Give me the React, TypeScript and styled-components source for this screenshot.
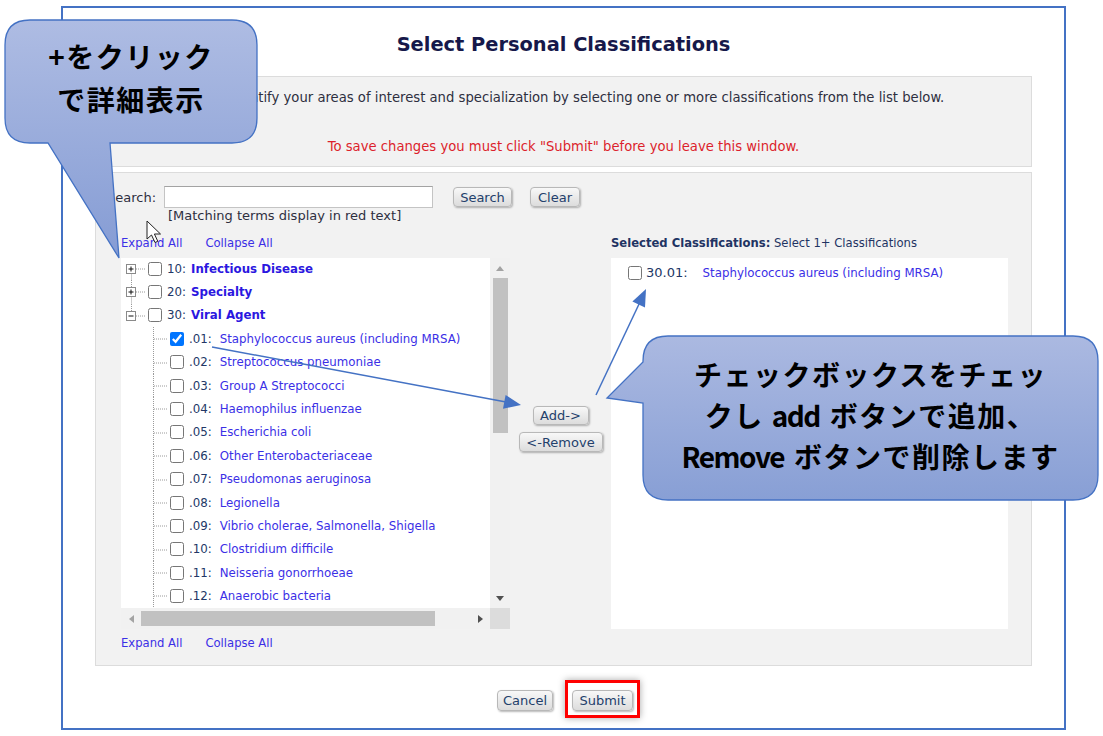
import React from "react";
import styled, { createGlobalStyle } from "styled-components";

const GlobalStyle = createGlobalStyle`
  html, body {
    margin: 0;
    padding: 0;
    background: #ffffff;
  }
  body {
    font-family: "DejaVu Sans", Verdana, sans-serif;
  }
`;

const Page = styled.div`
  position: relative;
  width: 1103px;
  height: 736px;
  overflow: hidden;
  box-sizing: border-box;
  padding: 6px 0 0 61px;
`;

const Frame = styled.div`
  width: 1005px;
  height: 724px;
  box-sizing: border-box;
  border: 2px solid #4472c4;
  padding: 0 32px;
  display: flex;
  flex-direction: column;
`;

const Title = styled.h1`
  margin: 0;
  height: 68px;
  box-sizing: border-box;
  padding-top: 26px;
  font-size: 19.4px;
  line-height: 22px;
  font-weight: bold;
  text-align: center;
  color: #16184a;
`;

const InfoBox = styled.div`
  height: 91px;
  box-sizing: border-box;
  border: 1px solid #dcdcdc;
  background: #f2f2f2;
  padding-top: 13px;
  text-align: center;
  font-size: 13.2px;
  line-height: 16px;
`;

const InfoLine = styled.div<{ $warn?: boolean }>`
  color: ${(p) => (p.$warn ? "#dc1f2c" : "#2e2f3f")};
  margin-top: ${(p) => (p.$warn ? "33px" : "0")};
  white-space: nowrap;
`;

const WorkBox = styled.div`
  margin-top: 5px;
  height: 494px;
  box-sizing: border-box;
  border: 1px solid #dcdcdc;
  background: #f2f2f2;
  padding: 13px 0 0 11px;
`;

const SearchRow = styled.div`
  display: flex;
  align-items: center;
  height: 22px;
`;

const SearchLabel = styled.span`
  width: 57px;
  font-size: 13px;
  color: #2e2f3f;
`;

const SearchInput = styled.input`
  width: 269px;
  height: 22px;
  box-sizing: border-box;
  margin: 0 20px 0 0;
  border: 1px solid #c4c4c4;
  border-top-color: #a3a3a3;
  background: #ffffff;
`;

const Btn = styled.button<{ $w: number; $h?: number }>`
  width: ${(p) => p.$w}px;
  height: ${(p) => p.$h ?? 20}px;
  padding: 0;
  font-family: "DejaVu Sans", Verdana, sans-serif;
  font-size: 13px;
  color: #23406b;
  background: linear-gradient(#f8f8f8, #dcdcdc);
  border: 1px solid #b8b8b8;
  border-radius: 4px;
  box-shadow: 1px 1px 2px rgba(0, 0, 0, 0.28);
`;

const Hint = styled.div`
  margin: 1px 0 0 61px;
  font-size: 13px;
  line-height: 14px;
  color: #2e2f3f;
`;

const Columns = styled.div`
  display: flex;
  margin: 13px 0 0 14px;
`;

const LeftCol = styled.div`
  width: 389px;
  display: flex;
  flex-direction: column;
`;

const MidCol = styled.div`
  width: 101px;
  display: flex;
  flex-direction: column;
  align-items: center;
  padding-top: 170px;
  gap: 7px;
`;

const RightCol = styled.div`
  width: 397px;
  display: flex;
  flex-direction: column;
`;

const LinkRow = styled.div<{ $top?: number }>`
  display: flex;
  gap: 23px;
  height: 14px;
  margin-top: ${(p) => p.$top ?? 0}px;
  font-size: 11.6px;
  line-height: 14px;
  color: #3b2fe6;
`;

const Heading = styled.div`
  height: 14px;
  font-size: 11.6px;
  line-height: 14px;
  color: #1f3463;
  white-space: nowrap;
  b {
    font-weight: bold;
  }
`;

const TreeBox = styled.div`
  margin-top: 8px;
  height: 371px;
  display: grid;
  grid-template-columns: 1fr 20px;
  grid-template-rows: 1fr 21px;
  background: #ffffff;
`;

const TreeScroll = styled.div`
  overflow: hidden;
`;

const TreeList = styled.div`
  margin-top: -1px;
`;

const Row = styled.div<{ $indent: number }>`
  display: flex;
  align-items: center;
  height: 23.4px;
  padding-left: ${(p) => p.$indent}px;
  white-space: nowrap;
  font-size: 11.8px;
`;

const Check = styled.input`
  width: 14px;
  height: 14px;
  margin: 0 5px 0 0;
  flex: none;
`;

const Code = styled.span<{ $size?: number }>`
  color: #223766;
  font-size: ${(p) => p.$size ?? 11.8}px;
`;

const Name = styled.span<{ $bold?: boolean; $gap: number }>`
  margin-left: ${(p) => p.$gap}px;
  color: ${(p) => (p.$bold ? "#2b17e0" : "#3b2fe6")};
  font-weight: ${(p) => (p.$bold ? "bold" : "normal")};
`;

const VScroll = styled.div`
  background: #f1f1f1;
  display: flex;
  flex-direction: column;
  align-items: center;
`;

const HScroll = styled.div`
  background: #f1f1f1;
  display: flex;
  align-items: center;
`;

const ArrowCell = styled.div`
  width: 20px;
  height: 20px;
  display: flex;
  align-items: center;
  justify-content: center;
  flex: none;
`;

const VThumb = styled.div`
  width: 15px;
  height: 155px;
  background: #c1c1c1;
`;

const HThumb = styled.div`
  width: 294px;
  height: 15px;
  background: #c1c1c1;
`;

const Spacer = styled.div`
  flex: 1;
`;

const Corner = styled.div`
  background: #dcdcdc;
`;

const SelectedPanel = styled.div`
  margin-top: 8px;
  height: 371px;
  background: #ffffff;
  padding-top: 7px;
  box-sizing: border-box;
`;

const SelectedRow = styled.div`
  display: flex;
  align-items: center;
  padding-left: 17px;
  height: 15px;
  font-size: 11.8px;
  white-space: nowrap;
`;

const Footer = styled.div`
  display: flex;
  justify-content: center;
  align-items: flex-start;
  gap: 12px;
  padding-left: 10px;
  margin-top: 14px;
`;

const CancelBtn = styled(Btn)`
  margin-top: 10px;
`;

const Highlight = styled.div`
  display: flex;
  padding: 7px 4px 4px 4px;
  border: 3px solid #ff0000;
  box-shadow: 0 0 7px rgba(0, 0, 0, 0.35);
`;

const Overlay = styled.svg`
  position: absolute;
  left: 0;
  top: 0;
  pointer-events: none;
`;

const CalloutText = styled.div<{ $x: number; $y: number; $w: number; $h: number; $lh: number }>`
  position: absolute;
  left: ${(p) => p.$x}px;
  top: ${(p) => p.$y}px;
  width: ${(p) => p.$w}px;
  height: ${(p) => p.$h}px;
  display: flex;
  flex-direction: column;
  align-items: center;
  justify-content: center;
  font-family: "Noto Sans CJK JP", sans-serif;
  font-weight: bold;
  font-size: 28px;
  line-height: ${(p) => p.$lh}px;
  color: #000000;
  letter-spacing: 1.5px;
  white-space: nowrap;
`;

const Latin = styled.span`
  font-weight: 600;
  letter-spacing: -1.5px;
  margin-right: 2px;
`;

type Kind = "down" | "both" | "up";

const TopGuide = ({ line, open }: { line: Kind; open: boolean }) => (
  <svg width="27" height="23.4" style={{ flex: "none" }}>
    {line !== "down" && (
      <line x1="10.5" y1="0" x2="10.5" y2="7.5" stroke="#9a9a9a" strokeDasharray="1 1" />
    )}
    {line !== "up" && (
      <line x1="10.5" y1="16.5" x2="10.5" y2="23.4" stroke="#9a9a9a" strokeDasharray="1 1" />
    )}
    <line x1="15" y1="12" x2="25" y2="12" stroke="#9a9a9a" strokeDasharray="1 1" />
    <rect x="5.5" y="7.5" width="9" height="9" fill="#ffffff" stroke="#8a8a8a" />
    <line x1="7.5" y1="12" x2="12.5" y2="12" stroke="#111" />
    {!open && <line x1="10" y1="9.5" x2="10" y2="14.5" stroke="#111" />}
  </svg>
);

const ChildGuide = () => (
  <svg width="22" height="23.4" style={{ flex: "none" }}>
    <line x1="5.5" y1="0" x2="5.5" y2="23.4" stroke="#9a9a9a" strokeDasharray="1 1" />
    <line x1="6" y1="12" x2="19" y2="12" stroke="#9a9a9a" strokeDasharray="1 1" />
  </svg>
);

const Tri = ({ dir, dark }: { dir: "up" | "down" | "left" | "right"; dark?: boolean }) => {
  const pts = {
    up: "0,5 4,0 8,5",
    down: "0,0 8,0 4,5",
    left: "5,0 5,8 0,4",
    right: "0,0 0,8 5,4",
  }[dir];
  const w = dir === "up" || dir === "down" ? 8 : 5;
  const h = dir === "up" || dir === "down" ? 5 : 8;
  return (
    <svg width={w} height={h}>
      <polygon points={pts} fill={dark ? "#505050" : "#a3a3a3"} />
    </svg>
  );
};

const groups = [
  { code: "10:", label: "Infectious Disease", line: "down" as Kind, open: false },
  { code: "20:", label: "Specialty", line: "both" as Kind, open: false },
  { code: "30:", label: "Viral Agent", line: "up" as Kind, open: true },
];

const children = [
  [".01:", "Staphylococcus aureus (including MRSA)"],
  [".02:", "Streptococcus pneumoniae"],
  [".03:", "Group A Streptococci"],
  [".04:", "Haemophilus influenzae"],
  [".05:", "Escherichia coli"],
  [".06:", "Other Enterobacteriaceae"],
  [".07:", "Pseudomonas aeruginosa"],
  [".08:", "Legionella"],
  [".09:", "Vibrio cholerae, Salmonella, Shigella"],
  [".10:", "Clostridium difficile"],
  [".11:", "Neisseria gonorrhoeae"],
  [".12:", "Anaerobic bacteria"],
];

const App = () => {
  return (
    <>
      <GlobalStyle />
      <Page>
        <Frame>
          <Title>Select Personal Classifications</Title>
          <InfoBox>
            <InfoLine>
              Please identify your areas of interest and specialization by selecting one or more classifications from the list below.
            </InfoLine>
            <InfoLine $warn>To save changes you must click "Submit" before you leave this window.</InfoLine>
          </InfoBox>

          <WorkBox>
            <SearchRow>
              <SearchLabel>Search:</SearchLabel>
              <SearchInput type="text" />
              <Btn $w={59}>Search</Btn>
              <Btn $w={50} style={{ marginLeft: 18 }}>
                Clear
              </Btn>
            </SearchRow>
            <Hint>[Matching terms display in red text]</Hint>

            <Columns>
              <LeftCol>
                <LinkRow>
                  <span>Expand All</span>
                  <span>Collapse All</span>
                </LinkRow>
                <TreeBox>
                  <TreeScroll>
                    <TreeList>
                      {groups.map((g) => (
                        <Row key={g.code} $indent={0}>
                          <TopGuide line={g.line} open={g.open} />
                          <Check type="checkbox" readOnly />
                          <Code>{g.code}</Code>
                          <Name $bold $gap={5}>
                            {g.label}
                          </Name>
                        </Row>
                      ))}
                      {children.map(([code, label], i) => (
                        <Row key={code} $indent={27}>
                          <ChildGuide />
                          <Check type="checkbox" checked={i === 0} readOnly />
                          <Code>{code}</Code>
                          <Name $gap={8}>{label}</Name>
                        </Row>
                      ))}
                      <Row $indent={27}>
                        <ChildGuide />
                      </Row>
                    </TreeList>
                  </TreeScroll>
                  <VScroll>
                    <ArrowCell>
                      <Tri dir="up" />
                    </ArrowCell>
                    <VThumb />
                    <Spacer />
                    <ArrowCell>
                      <Tri dir="down" dark />
                    </ArrowCell>
                  </VScroll>
                  <HScroll>
                    <ArrowCell>
                      <Tri dir="left" />
                    </ArrowCell>
                    <HThumb />
                    <Spacer />
                    <ArrowCell>
                      <Tri dir="right" dark />
                    </ArrowCell>
                  </HScroll>
                  <Corner />
                </TreeBox>
                <LinkRow $top={7}>
                  <span>Expand All</span>
                  <span>Collapse All</span>
                </LinkRow>
              </LeftCol>

              <MidCol>
                <Btn $w={56} $h={19}>
                  Add-&gt;
                </Btn>
                <Btn $w={84}>&lt;-Remove</Btn>
              </MidCol>

              <RightCol>
                <Heading>
                  <b>Selected Classifications:</b> Select 1+ Classifications
                </Heading>
                <SelectedPanel>
                  <SelectedRow>
                    <Check type="checkbox" readOnly style={{ marginRight: 4 }} />
                    <Code $size={13}>30.01:</Code>
                    <Name $gap={15}>Staphylococcus aureus (including MRSA)</Name>
                  </SelectedRow>
                </SelectedPanel>
              </RightCol>
            </Columns>
          </WorkBox>

          <Footer>
            <CancelBtn $w={56} $h={21}>
              Cancel
            </CancelBtn>
            <Highlight>
              <Btn $w={61} $h={21}>
                Submit
              </Btn>
            </Highlight>
          </Footer>
        </Frame>

        <Overlay width="1103" height="736" viewBox="0 0 1103 736">
          <defs>
            <linearGradient id="bubble1" x1="0" y1="20" x2="0" y2="258" gradientUnits="userSpaceOnUse">
              <stop offset="0" stopColor="#aebce3" />
              <stop offset="1" stopColor="#859cd4" />
            </linearGradient>
            <linearGradient id="bubble2" x1="0" y1="336" x2="0" y2="500" gradientUnits="userSpaceOnUse">
              <stop offset="0" stopColor="#abb9e1" />
              <stop offset="1" stopColor="#889fd5" />
            </linearGradient>
          </defs>

          {/* pointer arrows */}
          <line x1="212" y1="347" x2="506" y2="402" stroke="#4472c4" strokeWidth="1.5" />
          <polygon points="521,405 503,408.8 505.6,395" fill="#4472c4" />
          <line x1="596" y1="395" x2="640" y2="302" stroke="#4472c4" strokeWidth="1.5" />
          <polygon points="646,289 645,307.4 632.4,301.4" fill="#4472c4" />

          {/* mouse cursor */}
          <path
            d="M147 221 L147 239 L151.5 235 L155 242.5 L157.8 241.3 L154.4 234 L160.5 234 Z"
            fill="#ffffff"
            stroke="#222"
            strokeWidth="1"
            strokeLinejoin="round"
          />

          {/* callouts */}
          <path
            d="M30 20 H232 Q257 20 257 45 V118 Q257 143 232 143 H110 L119 258 L48 143 H30 Q5 143 5 118 V45 Q5 20 30 20 Z"
            fill="url(#bubble1)"
            stroke="#4472c4"
            strokeWidth="1.3"
          />
          <path
            d="M668 336 H1073 Q1098 336 1098 361 V475 Q1098 500 1073 500 H668 Q643 500 643 475 V403 L607 398 L643 362 V361 Q643 336 668 336 Z"
            fill="url(#bubble2)"
            stroke="#4472c4"
            strokeWidth="1.3"
          />
        </Overlay>

        <CalloutText $x={5} $y={17} $w={252} $h={121} $lh={43}>
          <div>+をクリック</div>
          <div>で詳細表示</div>
        </CalloutText>
        <CalloutText $x={643} $y={333} $w={455} $h={164} $lh={41}>
          <div>チェックボックスをチェッ</div>
          <div>
            クし <Latin>add</Latin> ボタンで追加、
          </div>
          <div>
            <Latin>Remove</Latin> ボタンで削除します
          </div>
        </CalloutText>
      </Page>
    </>
  );
};

export default App;
